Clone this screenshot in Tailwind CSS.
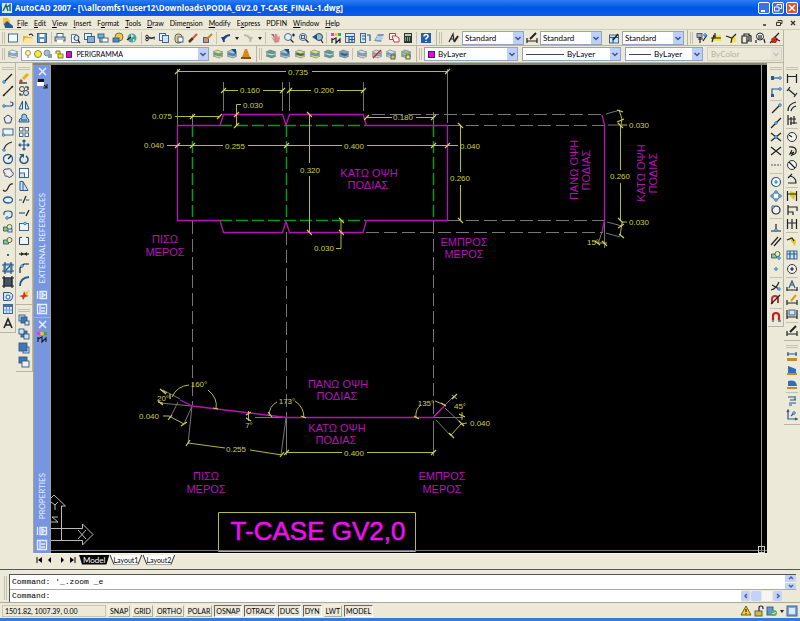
<!DOCTYPE html>
<html lang="en">
  <head>
    <meta charset="UTF-8" />
    <meta name="viewport" content="width=device-width, initial-scale=1.0" />
    <title>AutoCAD 2007 - PODIA_GV2.0_T-CASE_FINAL-1.dwg</title>
    <script src="https://cdn.jsdelivr.net/npm/@tailwindcss/browser@4"></script>
  </head>
  <body class="flex h-screen flex-col overflow-hidden bg-[#ece9d8] font-[Lato,'Liberation_Sans',sans-serif] text-[8px] leading-[10px] text-black">
    <!-- title bar -->
    <header class="flex h-4 shrink-0 items-center gap-[3px] bg-linear-to-b from-[#2a7df5] via-[#0055e0] to-[#0a5cf0] px-[2px] text-white">
      <svg class="size-[10px]" viewBox="0 0 10 10"><path fill="#d6e8e4" d="M0 0h10v10H0z"/><path stroke="#176a5e" stroke-width="1.5" fill="none" d="M1 8 4 2l2 6M5 4l3-2v6"/></svg>
      <h1 class="grow font-['Open_Sans',sans-serif] text-[8px] font-bold whitespace-nowrap">AutoCAD 2007 - [\\allcomfs1\user12\Downloads\PODIA_GV2.0_T-CASE_FINAL-1.dwg]</h1>
      <div class="flex gap-[2px]">
        <button aria-label="Minimize" class="size-3 rounded-xs border border-white bg-[#3b6fe8]"><svg viewBox="0 0 10 10"><path stroke="#fff" stroke-width="2" d="M2 8h4"/></svg></button>
        <button aria-label="Restore" class="size-3 rounded-xs border border-white bg-[#3b6fe8]"><svg viewBox="0 0 10 10"><path stroke="#fff" fill="none" d="M4 3V1.500h4.500v4H7M1.500 4h4.500v4H1.500z"/></svg></button>
        <button aria-label="Close" class="size-3 rounded-xs border border-white bg-[#dd5330]"><svg viewBox="0 0 10 10"><path stroke="#fff" stroke-width="1.500" d="m2 2 6 6m0-6L2 8"/></svg></button>
      </div>
    </header>

    <nav class="flex h-[13px] shrink-0 items-center gap-[6px] px-[3px] text-[7px] whitespace-nowrap">
      <svg class="-mr-[2px] size-[10px]" viewBox="0 0 10 10"><path fill="#f2c52c" d="M0 0h5l2 3v4H0z"/><path fill="#2a56a8" d="m1 6 3-3 6 5v2H2z"/></svg>
      <a href="#"><u>F</u>ile</a>
      <a href="#"><u>E</u>dit</a>
      <a href="#"><u>V</u>iew</a>
      <a href="#"><u>I</u>nsert</a>
      <a href="#">F<u>o</u>rmat</a>
      <a href="#"><u>T</u>ools</a>
      <a href="#"><u>D</u>raw</a>
      <a href="#">Dime<u>n</u>sion</a>
      <a href="#"><u>M</u>odify</a>
      <a href="#">E<u>x</u>press</a>
      <a href="#">PDFIN</a>
      <a href="#"><u>W</u>indow</a>
      <a href="#" class="grow"><u>H</u>elp</a>
      <button aria-label="Minimize drawing"><svg class="size-2" viewBox="0 0 8 8"><path stroke="#333" stroke-width="1.500" d="M2 6h3"/></svg></button>
      <button aria-label="Restore drawing"><svg class="size-2" viewBox="0 0 8 8"><path stroke="#333" fill="none" d="M3 2.500v-1h4v3H5.500M1.500 3.500h4v3h-4z"/></svg></button>
      <button aria-label="Close drawing"><svg class="size-2" viewBox="0 0 8 8"><path stroke="#333" stroke-width="1.300" d="m2 2 4 4m0-4L2 6"/></svg></button>
    </nav>

    <!-- standard, styles and dimension toolbars -->
    <div class="flex h-[17px] shrink-0 border-t border-[#d0ccba]">
      <div class="flex w-[437px] items-center justify-between border-r border-b border-[#b8b4a2] pr-1 pl-[2px]" data-icons="grip qnew open save | plot preview publish etransmit pub3d web | cut copy paste brush block | undo caret redo caret | pan zoomrt zoomwin zoomprev | props dcenter tpal sheet markup calc | help"></div>
      <div class="flex w-[251px] items-center gap-[2px] border-r border-b border-[#b8b4a2] pl-[2px]">
        <span class="h-3 w-[3px] border-x border-[#c5c1ae]"></span>
        <span class="ml-1 size-3" data-icon="tstyle"></span>
        <label class="flex h-[14px] w-[62px] shrink-0 items-center border border-[#8fa5c0] bg-white pl-[2px]"><select aria-label="Text style" class="min-w-0 grow appearance-none"><option>Standard</option></select><i data-icon="down"></i></label>
        <span class="size-3" data-icon="dstyle"></span>
        <label class="flex h-[14px] w-[62px] shrink-0 items-center border border-[#8fa5c0] bg-white pl-[2px]"><select aria-label="Dimension style" class="min-w-0 grow appearance-none"><option>Standard</option></select><i data-icon="down"></i></label>
        <span class="ml-1 size-3" data-icon="tablestyle"></span>
        <label class="flex h-[14px] w-[62px] shrink-0 items-center border border-[#8fa5c0] bg-white pl-[2px]"><select aria-label="Table style" class="min-w-0 grow appearance-none"><option>Standard</option></select><i data-icon="down"></i></label>
      </div>
      <div class="flex w-[96px] items-center justify-between border-r border-b border-[#b8b4a2] pr-[2px] pl-[2px]" data-icons="grip find break trim copies ident run"></div>
    </div>

    <!-- layers and properties toolbars -->
    <div class="flex h-[17px] shrink-0">
      <div class="flex w-[257px] items-center justify-between border-r border-b border-[#b8b4a2] pr-1 pl-[2px]">
        <span class="h-3 w-[3px] border-x border-[#c5c1ae]"></span>
        <span class="size-3" data-icon="layers"></span>
        <label class="flex h-[14px] w-[188px] items-center border border-[#8fa5c0] bg-white pl-[2px]">
          <svg class="mr-1 h-[10px] w-12" viewBox="0 0 48 10"><circle cx="4" cy="4" r="2.500" fill="#fff5a0" stroke="#a69a50"/><path stroke="#777" d="M3 8h2"/><circle cx="14" cy="5" r="3.500" fill="#f4ec38" stroke="#8a8a40"/><circle cx="23" cy="4" r="3" fill="#a8bcc8" stroke="#7890a0"/><path fill="#8aa0b0" d="M24 5h4v4h-4z"/><path d="M32 5V2h4v3m-2 0h5v4h-5z" fill="#e8e040" stroke="#827c20"/><path fill="#e800e8" stroke="#333" d="M42.500 2.500h5v6h-5z"/></svg>
          <select aria-label="Layer" class="min-w-0 grow appearance-none text-[7px]"><option>PERIGRAMMA</option></select><i data-icon="down"></i>
        </label>
        <span class="size-3" data-icon="layerset"></span>
        <span class="size-3" data-icon="layerprev"></span>
        <span class="size-3" data-icon="cone"></span>
      </div>
      <div class="flex w-[160px] items-center justify-between border-r border-b border-[#b8b4a2] pr-1 pl-[2px]" data-icons="grip lay1 layerprev lay2 layerset lay1 lay3 | lay4 layoff laylock layunlock"></div>
      <div class="flex w-[367px] items-center gap-1 border-r border-b border-[#b8b4a2] pl-[2px]">
        <span class="h-3 w-[3px] shrink-0 border-x border-[#c5c1ae]"></span>
        <label class="-ml-[2px] flex h-[14px] w-[94px] items-center gap-[3px] border border-[#8fa5c0] bg-white pl-[3px]"><span class="size-[7px] border border-[#333] bg-[#f000f0]"></span><select aria-label="Color" class="min-w-0 grow appearance-none"><option>ByLayer</option></select><i data-icon="down"></i></label>
        <label class="flex h-[14px] w-[99px] items-center gap-[3px] border border-[#8fa5c0] bg-white pl-[3px]"><span class="h-px w-[38px] shrink-0 bg-[#444]"></span><select aria-label="Linetype" class="min-w-0 grow appearance-none"><option>ByLayer</option></select><i data-icon="down"></i></label>
        <label class="flex h-[14px] w-[78px] items-center gap-[3px] border border-[#8fa5c0] bg-white pl-[3px]"><span class="h-px w-[22px] shrink-0 bg-[#444]"></span><select aria-label="Lineweight" class="min-w-0 grow appearance-none"><option>ByLayer</option></select><i data-icon="down"></i></label>
        <label class="flex h-[14px] w-[75px] items-center border border-[#d6d2c2] pl-[3px] text-[#b5b1a0]"><select disabled aria-label="Plot style" class="min-w-0 grow appearance-none"><option>ByColor</option></select><i data-icon="downoff"></i></label>
      </div>
    </div>

    <main class="flex min-h-0 grow">
      <!-- draw -->
      <div class="w-4 shrink-0">
        <div class="flex h-[270px] flex-col items-center justify-between border-r border-b border-[#b8b4a2] pt-1 pb-[3px]" data-icons="gripv line xline pline polygon rect arc circle cloud spline ellipse earc insert mkblock point hatch gradient region table mtext"></div>
      </div>
      <!-- modify, draw order -->
      <div class="w-[17px] shrink-0">
        <div class="flex h-[242px] flex-col items-center justify-between border-r border-b border-[#b8b4a2] pt-1 pb-[3px]" data-icons="gripv erase copyobj mirror offset array move rotate scale stretch trimx extend breakpt breakgap join chamfer fillet explode"></div>
        <div class="flex h-[67px] flex-col items-center justify-between border-r border-b border-[#b8b4a2] pt-1 pb-[3px]" data-icons="gripv front back above under"></div>
      </div>
      <div class="flex min-w-0 grow flex-col">
        <div class="flex min-h-0 grow border-t-2 border-[#85837a]">
          <!-- collapsed palettes -->
          <div class="flex w-[18px] shrink-0 flex-col gap-px border-x border-[#a5a290] bg-[#b9b6a6] text-[#e6edff]">
            <section class="flex h-[252px] shrink-0 flex-col items-center gap-[2px] bg-[#7896e0] py-[2px]">
              <button aria-label="Close External References"><svg class="size-[9px]" viewBox="0 0 9 9"><path stroke="#e6edff" stroke-width="1.500" d="m1 1 7 7m0-7L1 8"/></svg></button>
              <span data-icon="xref"></span>
              <h2 class="mt-auto mb-1 rotate-180 whitespace-nowrap [writing-mode:vertical-rl]">EXTERNAL REFERENCES</h2>
              <span class="h-3" data-icon="hide"></span>
              <span class="h-3" data-icon="palmenu"></span>
            </section>
            <section class="flex min-h-0 grow flex-col items-center gap-[2px] bg-[#7896e0] py-[2px]">
              <button aria-label="Close Properties"><svg class="size-[9px]" viewBox="0 0 9 9"><path stroke="#e6edff" stroke-width="1.500" d="m1 1 7 7m0-7L1 8"/></svg></button>
              <span data-icon="props"></span>
              <h2 class="mt-auto mb-1 rotate-180 whitespace-nowrap [writing-mode:vertical-rl]">PROPERTIES</h2>
              <span class="h-3" data-icon="hide"></span>
              <span class="h-3" data-icon="palmenu"></span>
            </section>
          </div>
          <!-- drawing area, model units shifted to the canvas corner -->
          <div class="relative min-w-0 grow overflow-hidden bg-black font-['Liberation_Sans',Arial,sans-serif]">
            <svg class="absolute inset-0 size-full" font-size="8">
              <g transform="translate(-51 -65)" fill="none">
                <g stroke="#777">
                  <g stroke-dasharray="13 5">
                    <path d="M192.500 114v11M192.500 221v184M286.500 232v185M433.500 112v13M433.500 221v196M372 114.500h231M448 125.500h156M448 220.500h156M366 232.500h237"/>
                  </g>
                  <path d="M177.500 69v56M447.500 69v54M223.500 82v29M282.500 82v29M289.500 82v29M363.500 82v29"/>
                  <path d="m606 114 14-4M608 125h12M607 222l15 4M606 233l14 4M604.500 222v26M602 232l-4 12"/>
                  <path d="m163 390 17 9M160 403l32 3M178 402l-8 16M192 406l-8 18M192 406l-4 38M286 418l-5 37M286.500 418v37M433.500 421v35M255 417.500h31M434 416l20-20M434 417.500h29M445 408l17 16M436 420l15 16"/>
                </g>
                <g stroke="#0b9a1e" stroke-width="1.500" stroke-dasharray="12 4">
                  <path d="M192.500 125v96M286.500 125v96M433.500 125v96M220 125.500h146M220 220.500h146"/>
                </g>
                <g stroke="#b813b8" stroke-width="1.300">
                  <path d="M220 125.500h-42.500v95H220M366.500 125.500h81v95h-81"/>
                  <path d="m220 125.500 3.500-11h59l3.500 10.500 3.500-10.500h73.500l3.500 11M220 220.500l3.500 12h59l3.500-11 3.500 11h73.500l3.500-12"/>
                  <path d="M602 115l2.500 10v95l-2.500 12"/>
                  <path d="m180 400 12.500 6 94 11.500h147l12-13"/>
                </g>
                <g stroke="#b9b93c">
                  <path d="M177 71.500h109M312 71.500h136M223 90.500h15M263 90.500h20M289 90.500h22M337 90.500h27M241 104.500h-4.500v21M175 116.500h45M366 117.500h26M416 117.500h18"/>
                  <path d="M167 145.500h56M248 145.500h94M367 145.500h91M309.500 115v48M309.500 176v56M336 248.500h5v-28M460.500 126v46M460.500 185v36M620.500 126v44M620.500 183v38"/>
                  <path d="m619 110 3 9-1 6h6M622 223l-2 13M622 222h5M598 243h9"/>
                  <path d="M172 397q5-11 17-12M208 390q10 8 8 19M158 402l5 1M162 390l5 3M163 416h6l15 8M188 443l37 5M250 450l32 5"/>
                  <path d="M269 416q0-10 8-14M295 401q9 6 9 17M248.500 411v10M416 418q-1-9 5-13M435 401l10 4M452 395l5 4M462 412v8M451 435l10-11 6-1M286 452.500h56M367 452.500h66"/>
                  <path d="M218.500 512.500h197v39h-197z"/>
                </g>
                <!-- dimension ticks -->
                <path stroke="#d2d24a" stroke-width="1.200" d="m175 74 5-5M445 74l5-5M221 93l5-5M280 93l5-5M287 93l5-5M361 93l5-5M234 117l5-5M234 128l5-5M190 119l5-5M217 119l5-5M364 120l5-5M431 120l5-5M175 148l5-5M190 148l5-5M284 148l5-5M431 148l5-5M445 148l5-5M307 112l5 5M307 230l5 5M339 218l5 5M339 230l5 5M458 123l5 5M458 218l5 5M618 123l5 5M618 218l5 5M617 110l6 2M617 122l7-3M619 234l5 4M618 228l6-4M602 241l5 5M595 241l5 4M170 394v5M213 408l5 1M160 389l6 5M158 401l5 4M168 420l4-5M181 426l6-4M186 446l4-6M280 457l4-5M284 455l5-5M431 455l5-5M268 412l4 5M301 416l5 2M246 415l5-3M246 418l5 3M414 416l5 3M441 403l5 3M452 399l5-5M459 414l6 3M459 421l5 5M449 433l5 5"/>
                <g fill="#cfcf45" text-anchor="middle">
                  <text x="298" y="75">0.735</text>
                  <text x="250" y="93">0.160</text>
                  <text x="324" y="93">0.200</text>
                  <text x="253" y="108">0.030</text>
                  <text x="162" y="119">0.075</text>
                  <text x="403" y="120">0.180</text>
                  <text x="154" y="148">0.040</text>
                  <text x="235" y="149">0.255</text>
                  <text x="354" y="149">0.400</text>
                  <text x="470" y="149">0.040</text>
                  <text x="310" y="173">0.320</text>
                  <text x="324" y="251">0.030</text>
                  <text x="460" y="181">0.260</text>
                  <text x="620" y="179">0.260</text>
                  <text x="639" y="128">0.030</text>
                  <text x="639" y="225">0.030</text>
                  <text x="593" y="245">15°</text>
                  <text x="199" y="387">160°</text>
                  <text x="163" y="401">20°</text>
                  <text x="149" y="419">0.040</text>
                  <text x="236" y="452">0.255</text>
                  <text x="249" y="428">7°</text>
                  <text x="287" y="404">173°</text>
                  <text x="354" y="456">0.400</text>
                  <text x="426" y="406">135°</text>
                  <text x="460" y="409">45°</text>
                  <text x="480" y="426">0.040</text>
                </g>
                <g fill="#b813b8" font-size="11" text-anchor="middle">
                  <text x="369" y="177">ΚΑΤΩ ΟΨΗ</text>
                  <text x="368" y="189">ΠΟΔΙΑΣ</text>
                  <text x="165" y="243">ΠΙΣΩ</text>
                  <text x="165" y="256">ΜΕΡΟΣ</text>
                  <text x="464" y="246">ΕΜΠΡΟΣ</text>
                  <text x="464" y="258">ΜΕΡΟΣ</text>
                  <text x="338" y="388">ΠΑΝΩ ΟΨΗ</text>
                  <text x="337" y="400">ΠΟΔΙΑΣ</text>
                  <text x="337" y="432">ΚΑΤΩ ΟΨΗ</text>
                  <text x="336" y="444">ΠΟΔΙΑΣ</text>
                  <text x="206" y="480">ΠΙΣΩ</text>
                  <text x="206" y="493">ΜΕΡΟΣ</text>
                  <text x="442" y="480">ΕΜΠΡΟΣ</text>
                  <text x="442" y="493">ΜΕΡΟΣ</text>
                  <text transform="translate(578 170) rotate(-90)">ΠΑΝΩ ΟΨΗ</text>
                  <text transform="translate(590 170) rotate(-90)">ΠΟΔΙΑΣ</text>
                  <text transform="translate(645 173) rotate(-90)">ΚΑΤΩ ΟΨΗ</text>
                  <text transform="translate(657 173) rotate(-90)">ΠΟΔΙΑΣ</text>
                </g>
                <text x="318" y="540" fill="#ee10ee" stroke="#ee10ee" stroke-width=".5" font-size="26" text-anchor="middle">T-CASE GV2,0</text>
                <!-- UCS icon -->
                <path stroke="#bbb" d="M61.500 541v-35h4L54 495l-3 3M51 528.500h31.500V524l10.500 10.500L82.500 545v-4.500H51M78 530l8 9m0-9-8 9M51 502l4 3 3-3m-3 3v5M51 522h7l-6-5h6"/>
              </g>
            </svg>
            <!-- crosshair -->
            <div class="absolute inset-y-0 right-[5px] w-px bg-[#999]"></div>
            <div class="absolute inset-x-0 bottom-[2px] h-px bg-[#777]"></div>
            <div class="absolute right-[2px] bottom-0 size-[7px] border border-[#ccc]"></div>
          </div>
        </div>
        <!-- layout tabs -->
        <div class="flex h-3 shrink-0 items-center border-t border-[#f8f6ec]">
          <div class="flex w-[46px] items-center justify-around">
            <button aria-label="First tab"><svg class="size-2" viewBox="0 0 8 8"><path stroke="#000" d="M2 1v6"/><path fill="#000" d="M7 1v6L3 4z"/></svg></button>
            <button aria-label="Previous tab"><svg class="size-2" viewBox="0 0 8 8"><path fill="#000" d="M5 1v6L2 4z"/></svg></button>
            <button aria-label="Next tab"><svg class="size-2" viewBox="0 0 8 8"><path fill="#000" d="M3 1v6l3-3z"/></svg></button>
            <button aria-label="Last tab"><svg class="size-2" viewBox="0 0 8 8"><path fill="#000" d="M1 1v6l4-3z"/><path stroke="#000" d="M6 1v6"/></svg></button>
          </div>
          <button class="bg-black px-1 text-white [clip-path:polygon(0_0,100%_0,calc(100%-3px)_100%,3px_100%)]">Model</button>
          <button class="bg-[#333] px-px text-[7px] [clip-path:polygon(0_0,100%_0,calc(100%-4px)_100%,4px_100%)]"><span class="block bg-white px-[3px] [clip-path:polygon(0_0,100%_0,calc(100%-4px)_100%,4px_100%)]">Layout1</span></button>
          <button class="bg-[#333] px-px text-[7px] [clip-path:polygon(0_0,100%_0,calc(100%-4px)_100%,4px_100%)]"><span class="block bg-white px-[3px] [clip-path:polygon(0_0,100%_0,calc(100%-4px)_100%,4px_100%)]">Layout2</span></button>
        </div>
      </div>
      <!-- object snap -->
      <div class="ml-px w-4 shrink-0">
        <div class="flex h-[264px] flex-col items-center justify-between border-r border-b border-[#b8b4a2] pt-1 pb-[3px]" data-icons="gripv track from - endpt midpt inter appint ext - center quad tan - perp para snapins node - near none - osnap"></div>
      </div>
      <!-- dimension, inquiry -->
      <div class="w-4 shrink-0">
        <div class="flex h-[278px] flex-col items-center justify-between border-b border-[#b8b4a2] pt-1 pb-[3px]" data-icons="gripv dlin dali darc dord - drad djog ddia dang - dqck dbas dcon - dlead dtol dcen - dedit dtedit dupd - dstyle"></div>
        <div class="flex h-[84px] flex-col items-center justify-between border-b border-[#b8b4a2] pt-1 pb-[3px]" data-icons="gripv dist area mass - list locate"></div>
      </div>
    </main>

    <!-- command window -->
    <section class="mt-1 flex shrink-0 border-t border-[#555] pt-1 pr-1 pl-1 font-['Liberation_Mono','Courier_New',monospace]">
      <span class="my-[2px] mr-[2px] w-[3px] border-x border-[#c5c1ae]"></span>
      <div class="grow border-t border-l border-[#555]">
        <div class="flex h-[14px] bg-white">
          <output class="grow py-[2px] pl-[2px]">Command: '_.zoom _e</output>
          <div class="flex w-[11px] flex-col gap-px bg-[#f3f1ea]">
            <button aria-label="Scroll up" class="grow bg-[#c2d2fa]"><svg class="mx-auto size-[6px]" viewBox="0 0 6 6"><path stroke="#4d6185" stroke-width="1.500" fill="none" d="m1 4 2-2 2 2"/></svg></button>
            <button aria-label="Scroll down" class="grow bg-[#c2d2fa]"><svg class="mx-auto size-[6px]" viewBox="0 0 6 6"><path stroke="#4d6185" stroke-width="1.500" fill="none" d="m1 2 2 2 2-2"/></svg></button>
          </div>
        </div>
        <div class="flex h-[13px] items-center border-t border-[#aaa] bg-white">
          <label for="cmd" class="pl-[2px]">Command:</label>
          <input id="cmd" type="text" class="min-w-0 grow pl-1 outline-none" />
          <div class="flex h-full w-[55px] items-center gap-px bg-[#ece9d8] pr-[14px]">
            <button aria-label="Scroll left" class="h-[10px] w-[9px] rounded-xs bg-[#c2d2fa]"><svg class="mx-auto size-[6px]" viewBox="0 0 6 6"><path stroke="#4d6185" stroke-width="1.500" fill="none" d="M4 1 2 3l2 2"/></svg></button>
            <span class="h-[10px] w-[10px] rounded-xs bg-[#c2d2fa]"></span>
            <span class="h-[10px] grow bg-[#f6f5f0]"></span>
            <button aria-label="Scroll right" class="h-[10px] w-[9px] rounded-xs bg-[#c2d2fa]"><svg class="mx-auto size-[6px]" viewBox="0 0 6 6"><path stroke="#4d6185" stroke-width="1.500" fill="none" d="m2 1 2 2-2 2"/></svg></button>
          </div>
        </div>
      </div>
    </section>

    <!-- status bar -->
    <footer class="flex h-[19px] shrink-0 items-center gap-[2px] border-t border-b-3 border-t-[#aca899] border-b-[#3c78d8] px-[2px] text-[7px]">
      <span class="w-[104px] border border-[#c9c5b2] px-[2px] whitespace-nowrap">1501.82, 1007.39, 0.00</span>
      <button class="border px-px border-t-[#f8f6ec] border-r-[#b0ac9a] border-b-[#b0ac9a] border-l-[#f8f6ec]">SNAP</button>
      <button class="border px-px border-t-[#f8f6ec] border-r-[#b0ac9a] border-b-[#b0ac9a] border-l-[#f8f6ec]">GRID</button>
      <button class="border px-px border-t-[#f8f6ec] border-r-[#b0ac9a] border-b-[#b0ac9a] border-l-[#f8f6ec]">ORTHO</button>
      <button class="border px-px border-t-[#f8f6ec] border-r-[#b0ac9a] border-b-[#b0ac9a] border-l-[#f8f6ec]">POLAR</button>
      <button aria-pressed="true" class="border px-px border-t-[#666] border-r-white border-b-white border-l-[#666]">OSNAP</button>
      <button aria-pressed="true" class="border px-px border-t-[#666] border-r-white border-b-white border-l-[#666]">OTRACK</button>
      <button aria-pressed="true" class="border px-px border-t-[#666] border-r-white border-b-white border-l-[#666]">DUCS</button>
      <button aria-pressed="true" class="border px-px border-t-[#666] border-r-white border-b-white border-l-[#666]">DYN</button>
      <button class="border px-px border-t-[#f8f6ec] border-r-[#b0ac9a] border-b-[#b0ac9a] border-l-[#f8f6ec]">LWT</button>
      <button aria-pressed="true" class="border px-px border-t-[#666] border-r-white border-b-white border-l-[#666]">MODEL</button>
      <div class="ml-auto flex items-center gap-px" data-icons="warn lock trusted caret clean"></div>
    </footer>

    <script>
      // every glyph sits on a 12 x 12 grid
      const paper = '<path fill="#f4f8ff" stroke="#5b7797" d="M2.5 2.500h5l2 2v6h-7z"/>';
      const stack = (a, b) => `<path fill="${a}" stroke="#54788c" stroke-width=".6" d="m1 8 4-2 6 2-4 2z"/><path fill="${b}" stroke="#54788c" stroke-width=".6" d="m1 6 4-2 6 2-4 2z"/><path fill="${a}" stroke="#54788c" stroke-width=".6" d="m1 4 4-2 6 2-4 2z"/>`;
      const dark = (d) => `<path fill="none" stroke="#222" stroke-width="1.200" d="${d}"/>`;
      const blue = (d) => `<path fill="none" stroke="#245a8c" stroke-width="1.200" d="${d}"/>`;
      const dot = (x, y) => `<circle cx="${x}" cy="${y}" r="1.300" fill="#9cd0ff" stroke="#2268a8" stroke-width=".8"/>`;
      const box = (x, y, w, h, f = "#cfe4fa") => `<rect x="${x}" y="${y}" width="${w}" height="${h}" fill="${f}" stroke="#335a80" stroke-width=".9"/>`;
      const fill = (c, d) => `<path fill="${c}" d="${d}"/>`;
      const cubes = '<path fill="#8cc48c" stroke="#23505c" stroke-width=".8" d="M1.500 5h5v4h-5z"/><circle cx="7.500" cy="5" r="2.500" fill="#f0eca0" stroke="#23505c" stroke-width=".8"/>';

      const icons = {
        qnew: box(1.5, 2, 9, 8, "#f4f9ff"),
        open: fill("#e3b33c", "M1 4h4l1 1h4v5H1z") + fill("#fbe69a", "M3 6h9l-3 5H1z") + dark("M7 3q3-2 4 1"),
        save: box(1.5, 1.5, 9, 9, "#5d95d4") + fill("#fff", "M3.500 2h5v3h-5zM4 7h4v3H4z"),
        plot: box(3, 1.5, 6, 4, "#fff") + box(1, 5, 10, 4, "#b8bcc8") + fill("#fff", "M3 8h6v3H3z"),
        preview: paper + dark("M9 8l2 3") + '<circle cx="7.500" cy="6" r="2.500" fill="#d6ecff" stroke="#345"/>',
        publish: box(1.5, 1.5, 7, 6, "#e8f1ff") + box(4.5, 4.5, 7, 6, "#7fb0dc"),
        etransmit: box(1, 2, 6, 4, "#74b2d4") + box(5, 6, 6, 4, "#fff") + blue("M3 6v4h2"),
        pub3d: '<circle cx="7" cy="5" r="4" fill="#e5cc58" stroke="#80702c"/>' + box(1, 6, 6, 4, "#4d8cc4"),
        web: '<circle cx="6" cy="6" r="4.500" fill="#48a0a8"/>' + fill("#d7f0a0", "M5 2l3 2-3 2zM7 7l2 1-2 2z") + dark("M1 8l4-3"),
        cut: dark("M4 5l7 2M4 7l7-2") + '<circle cx="3" cy="4.500" r="1.300" fill="none" stroke="#222"/><circle cx="3" cy="7.500" r="1.300" fill="none" stroke="#222"/>',
        copy: box(1.5, 1.5, 6, 7, "#e8f1ff") + box(4.5, 3.5, 6, 7),
        paste: '<rect x="2" y="2" width="7" height="9" rx="3" fill="#d6cf9a" stroke="#6d6848"/>' + box(5, 5, 5, 5, "#fff"),
        brush: '<path stroke="#603018" stroke-width="2.500" d="m2 10 4-4"/><path stroke="#e05030" stroke-width="2" d="m6 6 4-4"/>',
        block: box(1.5, 5.5, 5, 5, "#e08880") + '<path stroke="#c08820" stroke-width="2" d="m5 7 5-5"/>',
        undo: '<path fill="none" stroke="#1d3f80" stroke-width="2" d="M4 10q-2-6 6-7"/>' + fill("#1d3f80", "M1 5h6L3 9z"),
        redo: '<path fill="none" stroke="#bcbab0" stroke-width="2" d="M8 10q2-6-6-7"/>' + fill("#bcbab0", "M5 5h6L9 9z"),
        pan: fill("#d88888", "M2 4l3 3-2-5h2l1 3V2h2l1 4 1-2 1 1-1 5-4 1z") + fill("#678", "M2 2h3v3z"),
        zoomrt: '<circle cx="5" cy="5" r="3.500" fill="#dff0ff" stroke="#567"/>' + dark("m7.500 7.500 3 3M9 3h3m-1.500-1.500v3"),
        zoomwin: '<circle cx="5" cy="5" r="3.500" fill="#dff0ff" stroke="#567"/>' + box(3.5, 3.5, 3, 3) + dark("m7.500 7.500 3 3"),
        zoomprev: '<circle cx="7" cy="5" r="3.500" fill="#90c0d8" stroke="#345"/>' + fill("#1d4f80", "M0 5l5-3v6z") + dark("m9 8 2 3"),
        props: fill("#e040d0", "M1 1h3v3H1z") + fill("#e8c830", "M4.500 1h3v3h-3z") + fill("#40a060", "M8 1h3v3H8z") + dark("M2 6v5M2 8l4-2v5l4-4v4"),
        dcenter: box(1.5, 1.5, 9, 9) + blue("M1.500 4.500h9M5 4v7M5 7.500h6M8 4v7"),
        tpal: box(1.5, 1.5, 5, 9) + blue("M8 3h3v6M3 4h3M3 7h3"),
        sheet: fill("#789cba", "M1 9l4-7h6l-3 8z") + '<path stroke="#fff" d="M4 5h6M3 7h6"/>',
        markup: '<path fill="#fff" stroke="#d03040" d="M1.500 1.500h6v6h-6z"/><path fill="#fff" stroke="#d03040" d="M4 4h4l3 2v4H6z"/>',
        calc: fill("#2c352f", "M2 1h8v10H2z") + fill("#a5d8a0", "M3 2h6v2H3z") + '<path stroke="#fff" stroke-dasharray="1 1" d="M3 6h6M3 8h6"/>',
        help: fill("#2160a8", "M1 1h10v10H1z") + '<path fill="none" stroke="#fff" stroke-width="1.500" d="M4 4.500q0-2 2-2t2 2q0 1-2 2v1M6 9v1"/>',
        tstyle: dark("M1 10 5 2l1 7M2 7h4") + '<path stroke="#222" stroke-width="2" d="m6 10 4-6"/>',
        dstyle: '<path stroke="#222" stroke-width="2" d="m4 7 6-6"/>' + dark("M1 6v5M11 6v5M1 9h10"),
        tablestyle: box(1.5, 3, 9, 8) + blue("M1.500 5.500h9M5 5v6") + '<path stroke="#222" stroke-width="1.500" d="m5 8 5-6"/>',
        find: box(1, 1.5, 5, 4, "#aaa") + dark("M2 7h5M4 5v6M7 9l4-6") + dot(9, 3),
        break: fill("#f4e540", "M3 3h8v6H3z") + dark("M1 6h10M4 3l-2 7M5 1v5"),
        trim: fill("#f4e540", "M5 5h6v5H5z") + dark("M1 4l6 2 4-4M7 6l-1 5"),
        copies: dark("M2 4h5v7H2zM4 4V2h5v7H7M9 3l2 1v6"),
        ident: '<circle cx="6" cy="4.500" r="3.500" fill="#fff" stroke="#222"/>' + dark("M5 3v4M7 3v4M2 8v3M10 7l1 4"),
        run: fill("#c03020", "M2 7l4-3 3 3-2 4H3z") + dark("M6 5l4-4M7 7l4 2M3 9l-2 2"),
        layers: stack("#e8f2fa", "#9cbcd0"),
        layerset: stack("#e8e060", "#6aa0bc"),
        layerprev: stack("#a8c8e0", "#5580b0") + fill("#1d4f80", "M5 1h5v5z"),
        cone: fill("#d88820", "M5 1h2l3 8H2z") + fill("#8c5010", "M1 9h10v2H1z"),
        lay1: stack("#5f9f80", "#cfe4e8"), lay2: stack("#e8e060", "#38556c"), lay3: stack("#7fa0cc", "#2c4f86"), lay4: stack("#d5dbe8", "#98a8c0"),
        layoff: stack("#ddd", "#bbb") + '<path stroke="#d02020" stroke-width="1.500" d="m2 10 8-8"/>',
        laylock: stack("#d5dbe8", "#98a8c0") + box(6, 7, 4, 4, "#e0c040"), layunlock: stack("#a0b8a0", "#e8d840") + box(6, 7, 4, 4, "#f0e060"),

        line: dark("m2 10 8-8") + dot(2, 10), xline: dark("m1 11 10-10") + fill("#222", "M9 1h2v2zM1 9v2h2z"),
        pline: blue("M1 7h7q3 0 3-2T8 3") + dot(2, 7), polygon: '<path fill="#e6edf5" stroke="#345" d="M6 2l4 3-1.500 5h-5L2 5z"/>',
        rect: box(1, 3, 10, 6, "#eef3fa") + dot(1.5, 9), arc: dark("M2 11q0-7 8-9") + dot(2, 10),
        circle: '<circle cx="6" cy="6" r="4.500" fill="#e6f0fa" stroke="#245a8c" stroke-width="1.300"/>' + dark("m6 6 3-3"),
        cloud: '<path fill="#e8eef5" stroke="#446" d="M2 6q-2-4 3-4 5-1 4 2 4 2 1 5-3 3-5 0-3 1-2-3z"/>',
        spline: dark("M1 9q3 3 5-2t5-4"), ellipse: '<ellipse cx="6" cy="6" rx="4.500" ry="3" fill="#e6f0fa" stroke="#245a8c" stroke-width="1.300"/>',
        earc: blue("M2 7q-1-4 4-4t4 4q0 3-4 3") + dot(5, 10), insert: cubes + box(6, 7, 4, 3), mkblock: cubes,
        point: fill("#2268a8", "M5 5h2v2H5z"), hatch: box(2, 2, 8, 8) + blue("M3 0v12M9 0v12M0 3h12M0 9h12M4 8l4-4"),
        gradient: box(2, 2, 8, 8, "#456") + dark("M2 0v12M10 0v12M0 2h12M0 10h12"),
        region: '<path fill="#cfe4fa" stroke="#245a8c" d="M1.500 10.500v-8h6q4 1 3 5t-4 3z"/><circle cx="6" cy="7" r="2" fill="#fff" stroke="#245a8c"/>',
        table: box(1.5, 1.5, 9, 9) + fill("#3f70b0", "M2 2h8v2H2z") + '<path stroke="#7fa0cc" d="M4.500 4v6M7.500 4v6M2 7h8"/>', mtext: '<path fill="none" stroke="#222" stroke-width="1.600" d="M2 11 6 2l4 9M3.500 8h5"/>',

        erase: '<path stroke="#e8b020" stroke-width="3" d="m5 7 5-5"/><path stroke="#a85040" stroke-width="3" d="m2 10 2-2"/>' + dark("M1 11h8"),
        copyobj: '<circle cx="4" cy="4" r="2.500" fill="none" stroke="#345"/><circle cx="8" cy="8" r="2.500" fill="#cfe4fa" stroke="#345"/>' + dark("M7 2h3v3M2 8v2h3"),
        mirror: '<path fill="#cfe4fa" stroke="#245a8c" d="M4.500 2v8H1zM7.500 2v8H11z"/>', offset: '<path fill="#a0c8ec" stroke="#245a8c" d="M1 10q0-4 3-4-1-4 2-4t3 4q2 0 2 4z"/>' + blue("M3 8h6"),
        array: box(1.5, 1.5, 3.5, 3.5, "#fff") + box(7, 1.5, 3.5, 3.5, "#fff") + box(1.5, 7, 3.5, 3.5, "#fff") + box(7, 7, 3.5, 3.5, "#fff"),
        move: blue("M6 1v10M1 6h10M4.500 2.500 6 1l1.500 1.500M4.500 9.500 6 11l1.500-1.500M2.500 4.500 1 6l1.500 1.500M9.500 4.500 11 6 9.500 7.500"),
        rotate: '<path fill="none" stroke="#245a8c" stroke-width="1.600" d="M4 3a4 4 0 1 0 4 0"/>' + fill("#245a8c", "M1 1h5v4z"),
        scale: box(1.5, 1.5, 9, 9, "#f4f8ff") + box(1.5, 6, 5, 4.5), stretch: '<path fill="#cfe4fa" stroke="#245a8c" d="M2 10.500v-9h3l5 9zM5 2v8"/>',
        trimx: blue("M1 6h3M8 6h3") + dark("M5 9l3-7"), extend: blue("M1 6h6") + dark("M8 9l3-6"),
        breakpt: box(1.5, 2.5, 9, 7, "#eef3fa") + dot(7, 2.5), breakgap: '<path fill="#eef3fa" stroke="#345" d="M4 2.500H1.500v7h9v-7H8"/>',
        join: dark("M1 6h10") + fill("#222", "M3 4l3 2-3 2zM9 4 6 6l3 2z"),
        chamfer: dark("M2 11V6l4-4h5") + dot(4, 4), fillet: '<path fill="none" stroke="#245a8c" stroke-width="1.800" d="M2 11q0-8 9-9"/>',
        explode: fill("#c83c20", "M1 7l4-1 1-4 2 4 3 1-4 1-2 3-1-3z") + fill("#f0b830", "M7 4l4-3-2 5z"),
        front: box(1, 1, 6, 6) + box(3, 3, 6, 6, "#3f78b8") + box(7, 7, 4, 4), back: box(3, 3, 6, 6, "#3f78b8") + box(1, 1, 5, 5) + box(6, 6, 5, 5),
        above: box(5, 5, 6, 6) + box(1, 1, 8, 8, "#3f78b8"), under: box(1, 1, 8, 6, "#3f78b8") + box(4, 5, 7, 6, "#eef3fa"),

        track: blue("M2 6h7") + dot(10, 6) + fill("#245a8c", "M1 4h3v4H1z"), from: blue("M2 10V3h7") + dot(10, 3) + fill("#245a8c", "M1 8h3v3H1z"),
        endpt: dark("m2 10 8-8") + dot(10, 2), midpt: dark("m1 11 10-10") + dot(6, 6), inter: dark("m1 2 10 8m0-8L1 10") + dot(6, 6), appint: dark("m1 2 10 8m0-8L1 10"),
        ext: '<path stroke="#555" stroke-dasharray="2 1" d="M1 6h10"/>',
        center: '<circle cx="6" cy="6" r="4.500" fill="#fff" stroke="#245a8c" stroke-width="1.200"/>' + dot(6, 6),
        quad: '<circle cx="6" cy="6" r="3.500" fill="#fff" stroke="#245a8c"/>' + dot(6, 2) + dot(6, 10) + dot(2, 6) + dot(10, 6),
        tan: '<circle cx="6" cy="6" r="4" fill="#eef" stroke="#222" stroke-width="1.200"/>' + dot(3, 3), perp: dark("M1 10h10M6 10V3") + dot(6, 9),
        para: dark("m1 10 7-8M4 11l7-8"), snapins: cubes + dot(9, 9), node: dot(6, 6), near: dark("M1 10q5-1 8-8M2 5l7 4") + dot(9, 9),
        none: '<path fill="none" stroke="#c03030" stroke-width="2" d="M2 10V5q0-3 3-3t3 3v4"/>' + dark("M1 10l9-9"), osnap: '<path fill="none" stroke="#c02020" stroke-width="2.200" d="M3 10V5q0-3 3-3t3 3v5"/>' + fill("#888", "M2 9h2v2H2zM8 9h3v2H8z"),

        dlin: dark("M1.500 2v9M10.500 2v9M1 4.500h10"), dali: dark("M2 3l7 6M1 5l3-4M8 11l3-4"), darc: dark("M2 11q0-7 8-9M5 11q1-4 5-5"), dord: dark("M2 1v10M2 5h8M5 3v8M8 2v8M4 9h7"),
        drad: '<circle cx="6" cy="6" r="4.500" fill="#f4f4f4" stroke="#333"/>' + dark("M6 6 3 4"), djog: dark("M3 2q6-1 7 3T6 10M6 5l-2 4 4-2-3 4"), ddia: '<circle cx="6" cy="6" r="4.500" fill="#f4f4f4" stroke="#333"/>' + dark("m3 3 6 6"),
        dang: dark("M6 1 2 5M4 3q6 1 6 7H2"), dqck: fill("#d8cc20", "M4 1l6 2-2 7-4-4z") + dark("M1.500 1v10M10.500 1v10M1 4h10"), dbas: dark("M2 1v10M2 3h9v4M2 8h5v3"), dcon: dark("M1.500 1v10M6 1v10M10.500 1v10M1 5h10"),
        dlead: fill("#d8cc20", "M4 2l6 3-1 6-4-5z") + dark("M1 5l5-2 2 3"), dtol: box(1, 2, 10, 8) + blue("M1 5h10M4 2v8M8 2v8"), dcen: '<circle cx="6" cy="6" r="4.500" fill="#f4f4f4" stroke="#333"/>' + dark("M6 4v4M4 6h4"),
        dedit: blue("M3 8l3-7 3 7M4 5h4") + dark("M1 7v4M11 7v4M1 10h10"), dtedit: '<path stroke="#d8a020" stroke-width="2" d="m5 7 5-6"/>' + dark("M1 6v5M11 6v5M1 9h10"), dupd: box(3, 2, 6, 5) + dark("M1 2v9M11 2v9M1 9h10"),
        dist: blue("M1 4h10M2 2v4M10 2v4") + fill("#c88828", "M1 8h10v3H1z"), area: fill("#2f70b4", "M2 2l8 3v4H2z") + fill("#c88828", "M1 9h10v2H1z"), mass: fill("#2f70b4", "M2 3q8-2 9 5H2z") + fill("#c88828", "M1 9h10v2H1z"),
        list: blue("M2 2h6M4 5h6M3 8h7M3 10h3M9 1v4"), locate: blue("M2 1v9h9M1 3l1-2 1 2M9 9l2 1-2 1M5 7l3-3") + dot(8, 4),

        xref: fill("#111", "M2 1h6v3H2z") + fill("#fff", "M1 4h7v4H1z") + dark("M8 7l3 3M11 6v4H7"),
        hide: '<path fill="none" stroke="#e6edff" stroke-width="1.300" d="M1.500 2v8M4 2.500h6.500v7H4zM6 4l3 2-3 2z"/>', palmenu: '<path fill="none" stroke="#e6edff" stroke-width="1.300" d="M1.500 1.500h9v9h-9zM4 2v8M5 5h4M5 8h4"/>',
        warn: '<path fill="#f4d030" stroke="#705c10" d="M6 1l5 9H1z"/>' + dark("M6 4v3M6 8v1"), lock: box(2, 6, 7, 5, "#e0b830") + dark("M6 6V3q0-2 2-2t2 2v1"),
        trusted: box(1, 2, 6, 8, "#5d95d4") + '<circle cx="8" cy="8" r="3" fill="#58b058"/>' + '<path stroke="#fff" fill="none" d="m6.500 8 1 1 2-2"/>', clean: box(1, 1, 10, 10, "#78a8e0") + fill("#d6eaff", "M3 3h6v6H3z"),
      };

      const draw = (name) => {
        if (name === "grip") return '<span class="h-3 w-[3px] shrink-0 border-x border-[#c5c1ae]"></span>';
        if (name === "gripv") return '<span class="h-[3px] w-3 shrink-0 border-y border-[#c5c1ae]"></span>';
        if (name === "|") return '<span class="h-3 w-px bg-[#c5c1ae]"></span>';
        if (name === "-") return '<span class="h-px w-3 shrink-0 bg-[#c5c1ae]"></span>';
        if (name === "caret") return '<svg class="h-3 w-[6px]" viewBox="0 0 6 12"><path fill="#222" d="M1 5h4L3 8z"/></svg>';
        return `<button class="size-3 shrink-0" aria-label="${name}"><svg class="size-3" viewBox="0 0 12 12">${icons[name]}</svg></button>`;
      };

      document.querySelectorAll("[data-icons]").forEach((bar) => {
        bar.innerHTML = bar.dataset.icons.split(" ").map(draw).join("");
      });

      document.querySelectorAll("[data-icon]").forEach((el) => {
        const name = el.dataset.icon;
        if (name === "down" || name === "downoff") {
          const off = name === "downoff";
          el.className = off ? "pointer-events-none h-3 w-[10px] shrink-0 bg-[#e6e3d4]" : "pointer-events-none h-3 w-[10px] shrink-0 bg-[#bfd0f8]";
          el.innerHTML = `<svg class="h-3 w-[10px]" viewBox="0 0 10 12"><path fill="none" stroke="${off ? "#c5c1b0" : "#3d5688"}" stroke-width="1.500" d="m2.500 5 2.500 2.500L7.500 5"/></svg>`;
        } else {
          el.innerHTML = draw(name);
        }
      });
    </script>
  </body>
</html>
